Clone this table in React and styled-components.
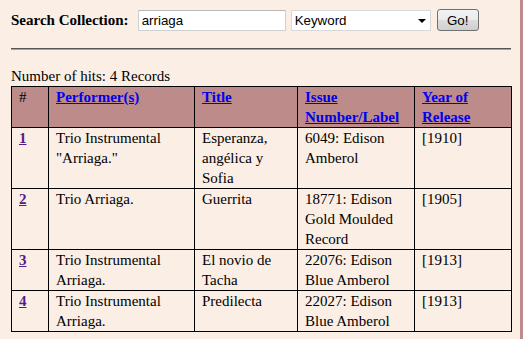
import React from 'react';
import styled, { createGlobalStyle } from 'styled-components';

const GlobalStyle = createGlobalStyle`
    html, body {
        margin: 0;
        padding: 0;
        background: #faeee5;
    }
`;

const Frame = styled.div`
    box-sizing: border-box;
    width: 523px;
    min-height: 100vh;
    padding: 9px 0 0 11px;
    border-right: 3px solid #bc8b8a;
    font-family: "Liberation Serif", "Times New Roman", serif;
    font-size: 15px;
    color: #000;
`;

const SearchForm = styled.form`
    display: flex;
    align-items: center;
    height: 22px;
    margin: 0;
`;

const Label = styled.label`
    font-weight: bold;
    font-size: 15px;
    margin-right: 9px;
`;

const TextInput = styled.input`
    box-sizing: border-box;
    width: 148px;
    height: 21px;
    margin: 0;
    padding: 0 3px;
    border: 1px solid #d0d0d0;
    border-top-color: #b8b8b8;
    background: #fff;
    font-family: "Liberation Sans", Arial, sans-serif;
    font-size: 13.33px;
    color: #000;
    outline: none;
`;

const SelectBox = styled.div`
    position: relative;
    box-sizing: border-box;
    width: 140px;
    height: 21px;
    margin-left: 5px;
    border: 1px solid #d8d8d8;
    background: #fff;
`;

const Select = styled.select`
    appearance: none;
    box-sizing: border-box;
    width: 100%;
    height: 100%;
    margin: 0;
    padding: 0 0 0 3px;
    border: none;
    background: transparent;
    font-family: "Liberation Sans", Arial, sans-serif;
    font-size: 13.33px;
    color: #000;
    outline: none;
`;

const Arrow = styled.span`
    position: absolute;
    right: 4px;
    top: 8px;
    width: 0;
    height: 0;
    border-left: 4px solid transparent;
    border-right: 4px solid transparent;
    border-top: 4px solid #000;
    pointer-events: none;
`;

const GoButton = styled.button`
    box-sizing: border-box;
    width: 42px;
    height: 22px;
    margin-left: 6px;
    padding: 0;
    border: 1px solid #707070;
    border-radius: 3px;
    background: linear-gradient(#f2f2f2, #ebebeb 50%, #dddddd 50%, #cfcfcf);
    font-family: "Liberation Sans", Arial, sans-serif;
    font-size: 13.33px;
    color: #000;
`;

const Rule = styled.hr`
    width: 500px;
    margin: 17px 0 0 0;
    border: none;
    border-top: 1px solid #555;
    border-bottom: 1px solid #a8a29e;
    height: 0;
`;

const Hits = styled.div`
    margin-top: 16px;
    line-height: 20px;
`;

const Table = styled.table`
    table-layout: fixed;
    width: 500px;
    border-collapse: collapse;
    border: 1px solid #000;
    line-height: 20px;
`;

const HeadCell = styled.th`
    padding: 0 4px 0 7px;
    border: 1px solid #000;
    background: #bc8b8a;
    text-align: left;
    vertical-align: top;
    font-weight: ${p => (p.$plain ? 'normal' : 'bold')};
`;

const Cell = styled.td`
    padding: 0 4px 0 7px;
    border: 1px solid #000;
    vertical-align: top;
`;

const HeadLink = styled.a`
    color: #0000ee;
    text-decoration: underline;
`;

const NumLink = styled.a`
    color: #551a8b;
    font-weight: bold;
    text-decoration: underline;
`;

const records = [
    { n: 1, performer: 'Trio Instrumental "Arriaga."', title: 'Esperanza, angélica y Sofia', issue: '6049: Edison Amberol', year: '[1910]' },
    { n: 2, performer: 'Trio Arriaga.', title: 'Guerrita', issue: '18771: Edison Gold Moulded Record', year: '[1905]' },
    { n: 3, performer: 'Trio Instrumental Arriaga.', title: 'El novio de Tacha', issue: '22076: Edison Blue Amberol', year: '[1913]' },
    { n: 4, performer: 'Trio Instrumental Arriaga.', title: 'Predilecta', issue: '22027: Edison Blue Amberol', year: '[1913]' },
];

export default function App() {
    return (
        <>
            <GlobalStyle />
            <Frame>
                <SearchForm onSubmit={e => e.preventDefault()}>
                    <Label>Search Collection:</Label>
                    <TextInput defaultValue="arriaga" />
                    <SelectBox>
                        <Select defaultValue="keyword">
                            <option value="keyword">Keyword</option>
                            <option value="title">Title</option>
                            <option value="performer">Performer</option>
                        </Select>
                        <Arrow />
                    </SelectBox>
                    <GoButton type="submit">Go!</GoButton>
                </SearchForm>
                <Rule />
                <Hits>Number of hits: 4 Records</Hits>
                <Table>
                    <colgroup>
                        <col style={{ width: 37 }} />
                        <col style={{ width: 146 }} />
                        <col style={{ width: 103 }} />
                        <col style={{ width: 117 }} />
                        <col style={{ width: 97 }} />
                    </colgroup>
                    <thead>
                        <tr>
                            <HeadCell $plain>#</HeadCell>
                            <HeadCell><HeadLink href="#">Performer(s)</HeadLink></HeadCell>
                            <HeadCell><HeadLink href="#">Title</HeadLink></HeadCell>
                            <HeadCell><HeadLink href="#">Issue Number/Label</HeadLink></HeadCell>
                            <HeadCell><HeadLink href="#">Year of Release</HeadLink></HeadCell>
                        </tr>
                    </thead>
                    <tbody>
                        {records.map(r => (
                            <tr key={r.n}>
                                <Cell><NumLink href="#">{r.n}</NumLink></Cell>
                                <Cell>{r.performer}</Cell>
                                <Cell>{r.title}</Cell>
                                <Cell>{r.issue}</Cell>
                                <Cell>{r.year}</Cell>
                            </tr>
                        ))}
                    </tbody>
                </Table>
            </Frame>
        </>
    );
}
